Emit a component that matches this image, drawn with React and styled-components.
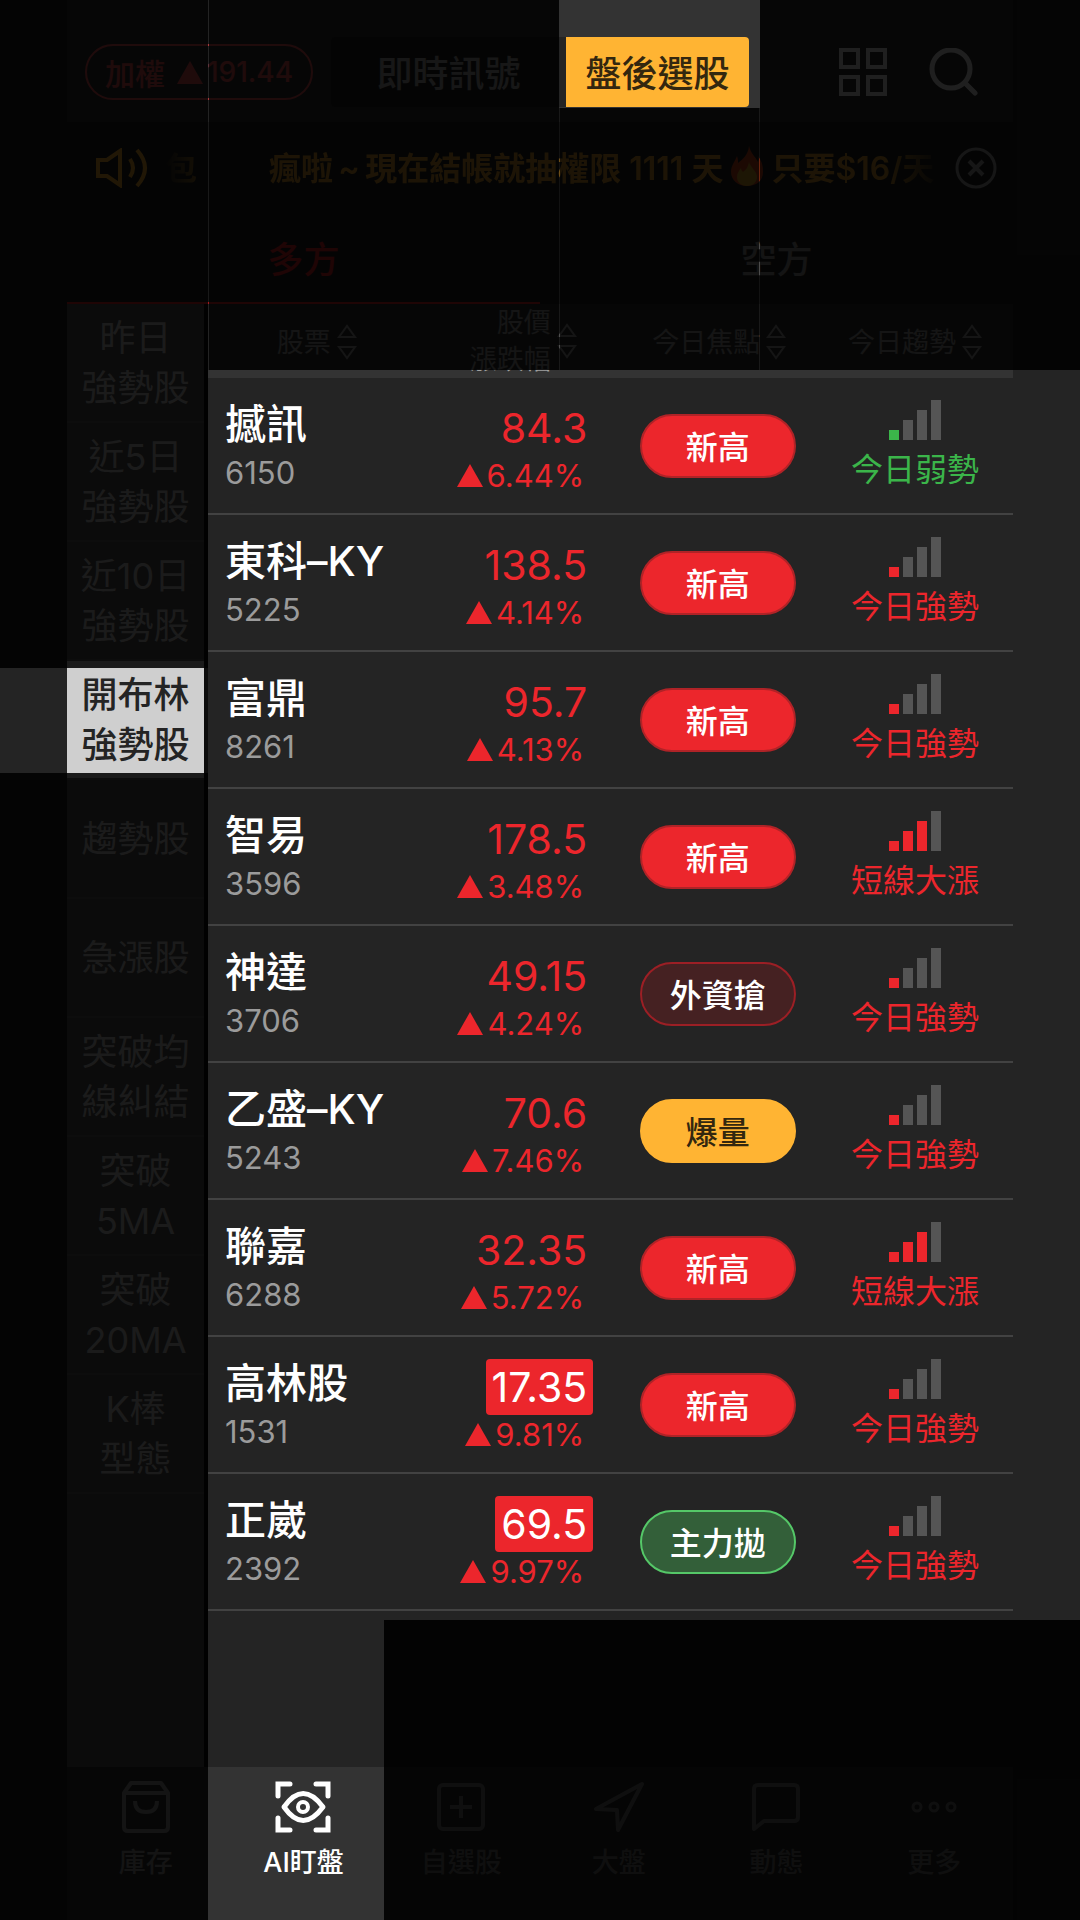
import React from "react";
import styled, { createGlobalStyle } from "styled-components";

const RED = "#ec262c";
const GREEN = "#3bb54a";
const YELLOW = "#ffb433";

const sideItems = [
  ["昨日", "強勢股"],
  ["近5日", "強勢股"],
  ["近10日", "強勢股"],
  ["開布林", "強勢股"],
  ["趨勢股"],
  ["急漲股"],
  ["突破均", "線糾結"],
  ["突破", "5MA"],
  ["突破", "20MA"],
  ["K棒", "型態"],
];

const stocks = [
  { name: "撼訊", code: "6150", price: "84.3", change: "6.44%", focus: "新高", kind: "high", level: 1, trend: "今日弱勢", weak: true },
  { name: "東科–KY", code: "5225", price: "138.5", change: "4.14%", focus: "新高", kind: "high", level: 1, trend: "今日強勢" },
  { name: "富鼎", code: "8261", price: "95.7", change: "4.13%", focus: "新高", kind: "high", level: 1, trend: "今日強勢" },
  { name: "智易", code: "3596", price: "178.5", change: "3.48%", focus: "新高", kind: "high", level: 3, trend: "短線大漲" },
  { name: "神達", code: "3706", price: "49.15", change: "4.24%", focus: "外資搶", kind: "buy", level: 1, trend: "今日強勢" },
  { name: "乙盛–KY", code: "5243", price: "70.6", change: "7.46%", focus: "爆量", kind: "volume", level: 1, trend: "今日強勢" },
  { name: "聯嘉", code: "6288", price: "32.35", change: "5.72%", focus: "新高", kind: "high", level: 3, trend: "短線大漲" },
  { name: "高林股", code: "1531", price: "17.35", change: "9.81%", focus: "新高", kind: "high", level: 1, trend: "今日強勢", limit: true },
  { name: "正崴", code: "2392", price: "69.5", change: "9.97%", focus: "主力拋", kind: "sell", level: 1, trend: "今日強勢", limit: true },
];

const pillColors = {
  high: { bg: RED, border: "#b02327", text: "#fff" },
  buy: { bg: "#452122", border: "#9c1f25", text: "#fff" },
  volume: { bg: YELLOW, border: YELLOW, text: "#33270f" },
  sell: { bg: "#335f39", border: "#55c868", text: "#fff" },
};

const navItems = [
  { label: "庫存", icon: <BagIcon /> },
  { label: "AI盯盤", icon: <EyeScanIcon />, active: true },
  { label: "自選股", icon: <PlusBoxIcon /> },
  { label: "大盤", icon: <ArrowIcon /> },
  { label: "動態", icon: <ChatIcon /> },
  { label: "更多", icon: <DotsIcon /> },
];

function App() {
  return (
    <>
      <GlobalStyle />
      <Page>
        <Phone>
          <Header>
            <IndexBadge type="button">
              加權
              <IndexChange>
                <UpTriangle />
                191.44
              </IndexChange>
            </IndexBadge>
            <Segment>
              <SegmentButton type="button">即時訊號</SegmentButton>
              <SegmentButton type="button" $active>
                盤後選股
              </SegmentButton>
            </Segment>
            <HeaderIcons>
              <IconButton type="button" aria-label="功能">
                <GridIcon />
              </IconButton>
              <IconButton type="button" aria-label="搜尋">
                <SearchIcon />
              </IconButton>
            </HeaderIcons>
          </Header>

          <Notice>
            <SpeakerIcon />
            <Ticker>
              <TickerTail>包</TickerTail>
              <span>瘋啦&thinsp;~&thinsp;現在結帳就抽權限 1111 天</span>
              <FlameIcon />
              <span>只要$16/天</span>
            </Ticker>
            <IconButton type="button" aria-label="關閉">
              <CloseIcon />
            </IconButton>
          </Notice>

          <Sides>
            <SideTab type="button" $active>
              多方
            </SideTab>
            <SideTab type="button">空方</SideTab>
          </Sides>

          <Body>
            <Sidebar>
              {sideItems.map((lines, i) => (
                <SideItem type="button" key={i} $active={i === 3}>
                  {lines.map((line) => (
                    <span key={line}>{line}</span>
                  ))}
                </SideItem>
              ))}
            </Sidebar>

            <Main>
              <Table>
                <colgroup>
                  <StockCol />
                  <col />
                  <col />
                  <col />
                </colgroup>
                <thead>
                  <tr>
                    <SortHeader>股票</SortHeader>
                    <SortHeader>
                      股價
                      <br />
                      漲跌幅
                    </SortHeader>
                    <SortHeader>今日焦點</SortHeader>
                    <SortHeader>今日趨勢</SortHeader>
                  </tr>
                </thead>
                <tbody>
                  {stocks.map((s) => (
                    <StockRow key={s.code} stock={s} />
                  ))}
                </tbody>
              </Table>
            </Main>
          </Body>

          <Nav>
            {navItems.map((item) => (
              <NavLink href="#" key={item.label} $active={item.active}>
                {item.icon}
                {item.label}
              </NavLink>
            ))}
          </Nav>
        </Phone>

        {/* guide mask, the uncovered cells stay lit */}
        <Mask aria-hidden="true">
          <Shade $area="1 / 1 / 5 / 2" />
          <Shade $area="6 / 1 / 8 / 2" />
          <Shade $area="1 / 3 / 4 / 5" />
          <Shade $area="3 / 6 / 4 / 7" />
          <Shade $area="1 / 8 / 4 / 9" />
          <Shade $area="7 / 4 / 8 / 9" $alpha={0.9} />
          {/* seams between the shades */}
          <Shade $area="1 / 2 / 4 / 3" $alpha={0.3} />
          <Shade $area="3 / 5 / 4 / 6" $alpha={0.5} />
          <Shade $area="3 / 7 / 4 / 8" $alpha={0.5} />
        </Mask>
      </Page>
    </>
  );
}

export default App;

function SortHeader({ children }) {
  return (
    <Th>
      <SortButton type="button">
        <span>{children}</span>
        <svg width="20" height="36" viewBox="0 0 20 36" fill="none" stroke="currentColor" strokeWidth="2">
          <path d="M2 13 L10 2 L18 13 Z M2 23 L10 34 L18 23 Z" />
        </svg>
      </SortButton>
    </Th>
  );
}

function StockRow({ stock }) {
  const color = stock.weak ? GREEN : RED;
  return (
    <tr>
      <NameCell>
        <Name>{stock.name}</Name>
        <Code>{stock.code}</Code>
      </NameCell>
      <PriceCell>
        <PriceStack>
          <Price $limit={stock.limit}>{stock.price}</Price>
          <Change>
            <UpTriangle />
            {stock.change}
          </Change>
        </PriceStack>
      </PriceCell>
      <FocusCell>
        <Pill $kind={stock.kind}>{stock.focus}</Pill>
      </FocusCell>
      <Cell>
        <Trend $color={color}>
          <svg width="52" height="40" viewBox="0 0 52 40">
            {[0, 1, 2, 3].map((n) => (
              <rect
                key={n}
                x={n * 14}
                y={30 - n * 10}
                width="10"
                height={10 + n * 10}
                fill={n < stock.level ? color : "#555"}
              />
            ))}
          </svg>
          {stock.trend}
        </Trend>
      </Cell>
    </tr>
  );
}

function UpTriangle() {
  return (
    <svg width="26" height="23" viewBox="0 0 26 23" fill="currentColor">
      <path d="M13 0 L26 23 H0 Z" />
    </svg>
  );
}

function GridIcon() {
  return (
    <svg width="48" height="48" viewBox="0 0 48 48" fill="none" stroke="currentColor" strokeWidth="4">
      <path d="M2 2h17v17H2z M29 2h17v17H29z M2 29h17v17H2z M29 29h17v17H29z" />
    </svg>
  );
}

function SearchIcon() {
  return (
    <svg width="50" height="48" viewBox="0 0 50 48" fill="none" stroke="currentColor" strokeWidth="5" strokeLinecap="round">
      <circle cx="22" cy="21" r="19" />
      <path d="M36 35 L46 45" />
    </svg>
  );
}

function SpeakerIcon() {
  return (
    <svg width="54" height="40" viewBox="0 0 54 40" fill="none" stroke={YELLOW} strokeWidth="4">
      <path d="M3 12h9L25 3v34L12 28H3z" />
      <path d="M35 11q6 9 0 18 M42 2q16 18 0 36" />
    </svg>
  );
}

function FlameIcon() {
  return (
    <svg width="32" height="40" viewBox="0 0 32 40">
      <path d="M18 0c2 8 6 10 9 16 1-2 1-4 0-6 5 7 5 12 5 16 0 9-7 14-16 14S0 34 0 26c0-7 4-10 6-16 1 3 1 5 1 7 5-4 10-8 11-17z" fill="#f4511e" />
      <path d="M18 16c1 5 8 9 8 15 0 5-4 9-10 9S6 36 6 31c0-4 2-6 4-9 0 2 1 3 2 4 3-2 5-5 6-10z" fill="#ffc02e" />
    </svg>
  );
}

function CloseIcon() {
  return (
    <svg width="42" height="42" viewBox="0 0 42 42" fill="none" stroke="#a8a8a8" strokeWidth="3">
      <circle cx="21" cy="21" r="19" />
      <path d="M14 14 L28 28 M28 14 L14 28" strokeWidth="4" />
    </svg>
  );
}

function NavSvg({ children }) {
  return (
    <svg width="56" height="52" viewBox="0 0 56 52" fill="none" stroke="currentColor" strokeWidth="4" strokeLinejoin="round">
      {children}
    </svg>
  );
}

function BagIcon() {
  return (
    <NavSvg>
      <path d="M6 12 L13 2h30l7 10v34q0 4-4 4H10q-4 0-4-4z M6 12h44 M17 20q0 11 11 11t11-11" />
    </NavSvg>
  );
}

function EyeScanIcon() {
  return (
    <NavSvg>
      <g strokeWidth="5" strokeLinejoin="miter">
        <path d="M3 15V3h12 M41 3h12v12 M53 37v12H41 M15 49H3V37" strokeLinecap="round" />
      </g>
      <path d="M9 26q19-27 39 0q-20 27-39 0z" strokeWidth="5" />
      <circle cx="28" cy="26" r="5" />
    </NavSvg>
  );
}

function PlusBoxIcon() {
  return (
    <NavSvg>
      <rect x="6" y="4" width="44" height="44" rx="4" />
      <path d="M28 15v22 M17 26h22" />
    </NavSvg>
  );
}

function ArrowIcon() {
  return (
    <NavSvg>
      <path d="M51 3 L27 49 L26 29 L5 28 Z" />
    </NavSvg>
  );
}

function ChatIcon() {
  return (
    <NavSvg>
      <path d="M6 48V8q0-4 4-4h36q4 0 4 4v28q0 4-4 4H16z" />
    </NavSvg>
  );
}

function DotsIcon() {
  return (
    <NavSvg>
      <g strokeWidth="3">
        <circle cx="11" cy="26" r="4" />
        <circle cx="28" cy="26" r="4" />
        <circle cx="45" cy="26" r="4" />
      </g>
    </NavSvg>
  );
}

const GlobalStyle = createGlobalStyle`
  * {
    box-sizing: border-box;
  }

  body {
    margin: 0;
    background: #242424;
    color: #fff;
    font-family: Inter, "Noto Sans CJK TC", sans-serif;
  }

  button {
    padding: 0;
    border: 0;
    background: none;
    color: inherit;
    font: inherit;
    white-space: nowrap;
    cursor: pointer;
  }

  svg {
    flex: none;
  }
`;

const Page = styled.div`
  position: relative;
  min-height: 100vh;
  padding: 0 67px;
  display: flex;
  flex-direction: column;
`;

const Phone = styled.div`
  flex: 1;
  display: flex;
  flex-direction: column;
`;

const Header = styled.header`
  display: flex;
  align-items: center;
  padding: 37px 34px 15px 18px;
  background: #333;
`;

const IndexBadge = styled.button`
  display: flex;
  align-items: center;
  justify-content: center;
  gap: 12px;
  width: 228px;
  height: 56px;
  margin-right: 18px;
  border: 2px solid #f0555a;
  border-radius: 28px;
  color: #f0555a;
  font-size: 30px;
  font-weight: 500;
`;

const IndexChange = styled.span`
  display: flex;
  align-items: center;
  gap: 4px;
  font-size: 28px;
`;

const Segment = styled.div`
  display: flex;
  flex: 1;
  max-width: 418px;
  border-radius: 4px;
  background: #242424;
`;

const SegmentButton = styled.button`
  flex: ${(p) => (p.$active ? "0 0 183px" : "1")};
  height: 70px;
  padding-bottom: 2px;
  border-radius: 0 4px 4px 0;
  background: ${(p) => (p.$active ? YELLOW : "transparent")};
  color: ${(p) => (p.$active ? "#33270f" : "#b0b0b0")};
  font-size: 36px;
  font-weight: 500;
`;

const HeaderIcons = styled.div`
  display: flex;
  gap: 42px;
  margin-left: auto;
  color: #f0f0f0;
`;

const IconButton = styled.button`
  display: flex;
`;

const Notice = styled.div`
  display: flex;
  align-items: center;
  height: 92px;
  padding: 0 16px 0 28px;
`;

const Ticker = styled.div`
  display: flex;
  flex: 1;
  align-items: center;
  gap: 8px;
  margin: 0 12px 0 16px;
  padding-bottom: 4px;
  overflow: hidden;
  opacity: 0.85;
  color: ${YELLOW};
  font-size: 32px;
  font-weight: 600;
  white-space: nowrap;
  mask-image: linear-gradient(90deg, transparent, #000 50px, #000 calc(100% - 60px), transparent);
`;

const TickerTail = styled.span`
  margin-right: 64px;
`;

const Sides = styled.div`
  display: flex;
`;

const SideTab = styled.button`
  flex: 1;
  height: 90px;
  padding-bottom: 2px;
  border-bottom: 2px solid ${(p) => (p.$active ? RED : "transparent")};
  color: ${(p) => (p.$active ? RED : "#999")};
  font-size: 36px;
  font-weight: 500;
`;

const Body = styled.div`
  display: flex;
  flex: 1;
`;

const Sidebar = styled.aside`
  display: flex;
  flex-direction: column;
  width: 141px;
  border-right: 4px solid #0c0c0c;
  background: #555;
`;

const SideItem = styled.button`
  display: flex;
  flex-direction: column;
  align-items: center;
  justify-content: center;
  height: 119px;
  border-bottom: 2px solid #666;
  background: ${(p) => (p.$active ? "#cfcfcf" : "transparent")};
  color: ${(p) => (p.$active ? "#242424" : "#d0d0d0")};
  font-size: 36px;
  font-weight: ${(p) => (p.$active ? 500 : 400)};
  line-height: 50px;
`;

const Main = styled.main`
  flex: 1;
`;

const Table = styled.table`
  width: 100%;
  table-layout: fixed;
  border-collapse: separate;
  border-spacing: 0;
`;

const StockCol = styled.col`
  width: 27%;
`;

const Th = styled.th`
  height: 74px;
  padding: 0;
  background: #333;
  color: #a0a0a0;
  font-size: 27px;
  font-weight: 400;
  line-height: 37px;
`;

const SortButton = styled.button`
  display: inline-flex;
  align-items: center;
  gap: 6px;
  text-align: right;
  vertical-align: middle;
`;

const Cell = styled.td`
  height: 137px;
  padding: 0;
  border-bottom: 2px solid #424242;
  text-align: center;
`;

const NameCell = styled(Cell)`
  padding-left: 17px;
  text-align: left;
`;

const Name = styled.div`
  font-size: 41px;
  font-weight: 500;
  line-height: 54px;
  white-space: nowrap;
`;

const Code = styled.div`
  color: #9b9b9b;
  font-size: 31px;
  line-height: 44px;
`;

const PriceCell = styled(Cell)`
  padding: 4px 28px 0 0;
`;

const PriceStack = styled.div`
  display: flex;
  flex-direction: column;
  align-items: flex-end;
  color: ${RED};
`;

const Price = styled.span`
  padding: 0 6px;
  border-radius: 4px;
  background: ${(p) => (p.$limit ? RED : "transparent")};
  color: ${(p) => (p.$limit ? "#fff" : "inherit")};
  font-size: 41px;
  line-height: 56px;
`;

const Change = styled.span`
  display: flex;
  align-items: center;
  gap: 4px;
  padding-right: 9px;
  font-size: 31px;
  line-height: 40px;
`;

const FocusCell = styled(Cell)`
  padding-right: 3px;
`;

const Pill = styled.span`
  display: inline-flex;
  align-items: center;
  justify-content: center;
  width: 156px;
  height: 64px;
  padding-bottom: 2px;
  border: 2px solid ${(p) => pillColors[p.$kind].border};
  border-radius: 32px;
  background: ${(p) => pillColors[p.$kind].bg};
  color: ${(p) => pillColors[p.$kind].text};
  font-size: 32px;
  font-weight: 500;
  vertical-align: middle;
`;

const Trend = styled.div`
  display: flex;
  flex-direction: column;
  align-items: center;
  gap: 8px;
  color: ${(p) => p.$color};
  font-size: 32px;
  line-height: 44px;
`;

const Nav = styled.nav`
  display: grid;
  grid-template-columns: repeat(6, 1fr);
  height: 153px;
  background: #333;
`;

const NavLink = styled.a`
  display: flex;
  flex-direction: column;
  align-items: center;
  gap: 12px;
  padding-top: 14px;
  color: ${(p) => (p.$active ? "#fff" : "#999")};
  font-size: 27px;
  font-weight: 500;
  line-height: 36px;
  text-decoration: none;
`;

const Mask = styled.div`
  position: absolute;
  inset: 0;
  display: grid;
  grid-template-columns: 208px 1px 175px 175px 1px 199px 1px 1fr;
  grid-template-rows: 107px 1px 262px 298px 105px 847px 1fr;
  pointer-events: none;
`;

const Shade = styled.div`
  grid-area: ${(p) => p.$area};
  background: rgba(0, 0, 0, ${(p) => p.$alpha || 0.87});
`;
